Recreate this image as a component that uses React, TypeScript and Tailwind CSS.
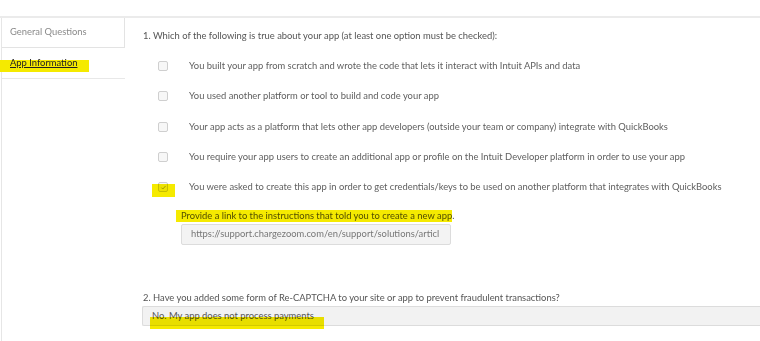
const options = [
  "You built your app from scratch and wrote the code that lets it interact with Intuit APIs and data",
  "You used another platform or tool to build and code your app",
  "Your app acts as a platform that lets other app developers (outside your team or company) integrate with QuickBooks",
  "You require your app users to create an additional app or profile on the Intuit Developer platform in order to use your app",
  "You were asked to create this app in order to get credentials/keys to be used on another platform that integrates with QuickBooks",
];

function Checkbox({ checked }: { checked?: boolean }) {
  return (
    <span className="flex h-[10px] w-[10px] shrink-0 items-center justify-center rounded-[2px] border border-[#cfcfcf] bg-[#f7f7f7]">
      {checked && (
        <svg viewBox="0 0 10 10" className="h-[7px] w-[7px]">
          <path d="M2 5.2 L4 7.2 L8 2.8" fill="none" stroke="#9a9a9a" strokeWidth="1.2" />
        </svg>
      )}
    </span>
  );
}

export default function App() {
  return (
    <div className="h-[341px] w-[760px] overflow-hidden bg-white pt-4 font-['Lato',sans-serif] text-[9.4px] text-[#555]">
      <div className="flex h-full border-t-2 border-[#ebebeb]">
        {/* side tabs */}
        <aside className="ml-px w-[124px] shrink-0 border-l border-[#e6e6e6]">
          <div className="flex h-[30px] items-center border-b border-r border-[#e3e3e3] pl-2 text-[#8a8a8a]">
            General Questions
          </div>
          <div className="relative flex h-[31px] items-center border-b border-[#e8e8e8] pl-2">
            <span className="absolute left-[-2px] top-[12px] h-[12px] w-[89px] bg-[#f5ea00]" />
            <span className="relative text-[#222] underline">App Information</span>
          </div>
        </aside>

        {/* questions */}
        <main className="flex-1 pl-[18px] pt-[11px]">
          <p className="leading-[14px]">
            1. Which of the following is true about your app (at least one option must be checked):
          </p>
          <div className="mt-[8px] flex flex-col">
            {options.map((o, i) => (
              <div key={i} className="flex h-[30.25px] items-center gap-[21px] pl-[15px] text-[#606060]">
                <span className="relative flex">
                  {i === 4 && (
                    <span className="absolute left-[-6px] top-[2px] h-[13px] w-[23px] bg-[#f5ea00] mix-blend-multiply" />
                  )}
                  <Checkbox checked={i === 4} />
                </span>
                <span className="whitespace-nowrap">{o}</span>
              </div>
            ))}
          </div>

          <div className="ml-[38px] mt-[8px] w-[270px]">
            <p className="relative whitespace-nowrap leading-[12px] text-[#555]">
              <span className="absolute left-[-5px] top-0 h-[12px] w-[276px] bg-[#f5ea00] mix-blend-multiply" />
              Provide a link to the instructions that told you to create a new app.
            </p>
            <div className="mt-[1.5px] flex h-[21px] items-center overflow-hidden whitespace-nowrap rounded-[2px] border border-[#dcdcdc] bg-[#f3f3f3] pl-[9px] text-[#777]">
              https://support.chargezoom.com/en/support/solutions/articl
            </div>
          </div>

          <p className="mt-[46px] leading-[14px]">
            2. Have you added some form of Re-CAPTCHA to your site or app to prevent fraudulent transactions?
          </p>
          <div className="relative ml-[-1px] mt-px flex h-[20px] items-center rounded-l-[2px] border-y border-l border-[#dcdcdc] bg-[#f2f2f2] pl-[9px] text-[#555]">
            <span className="absolute left-[7px] top-[10px] h-[12px] w-[174px] bg-[#f5ea00] mix-blend-multiply" />
            No. My app does not process payments
          </div>
        </main>
      </div>
    </div>
  );
}
